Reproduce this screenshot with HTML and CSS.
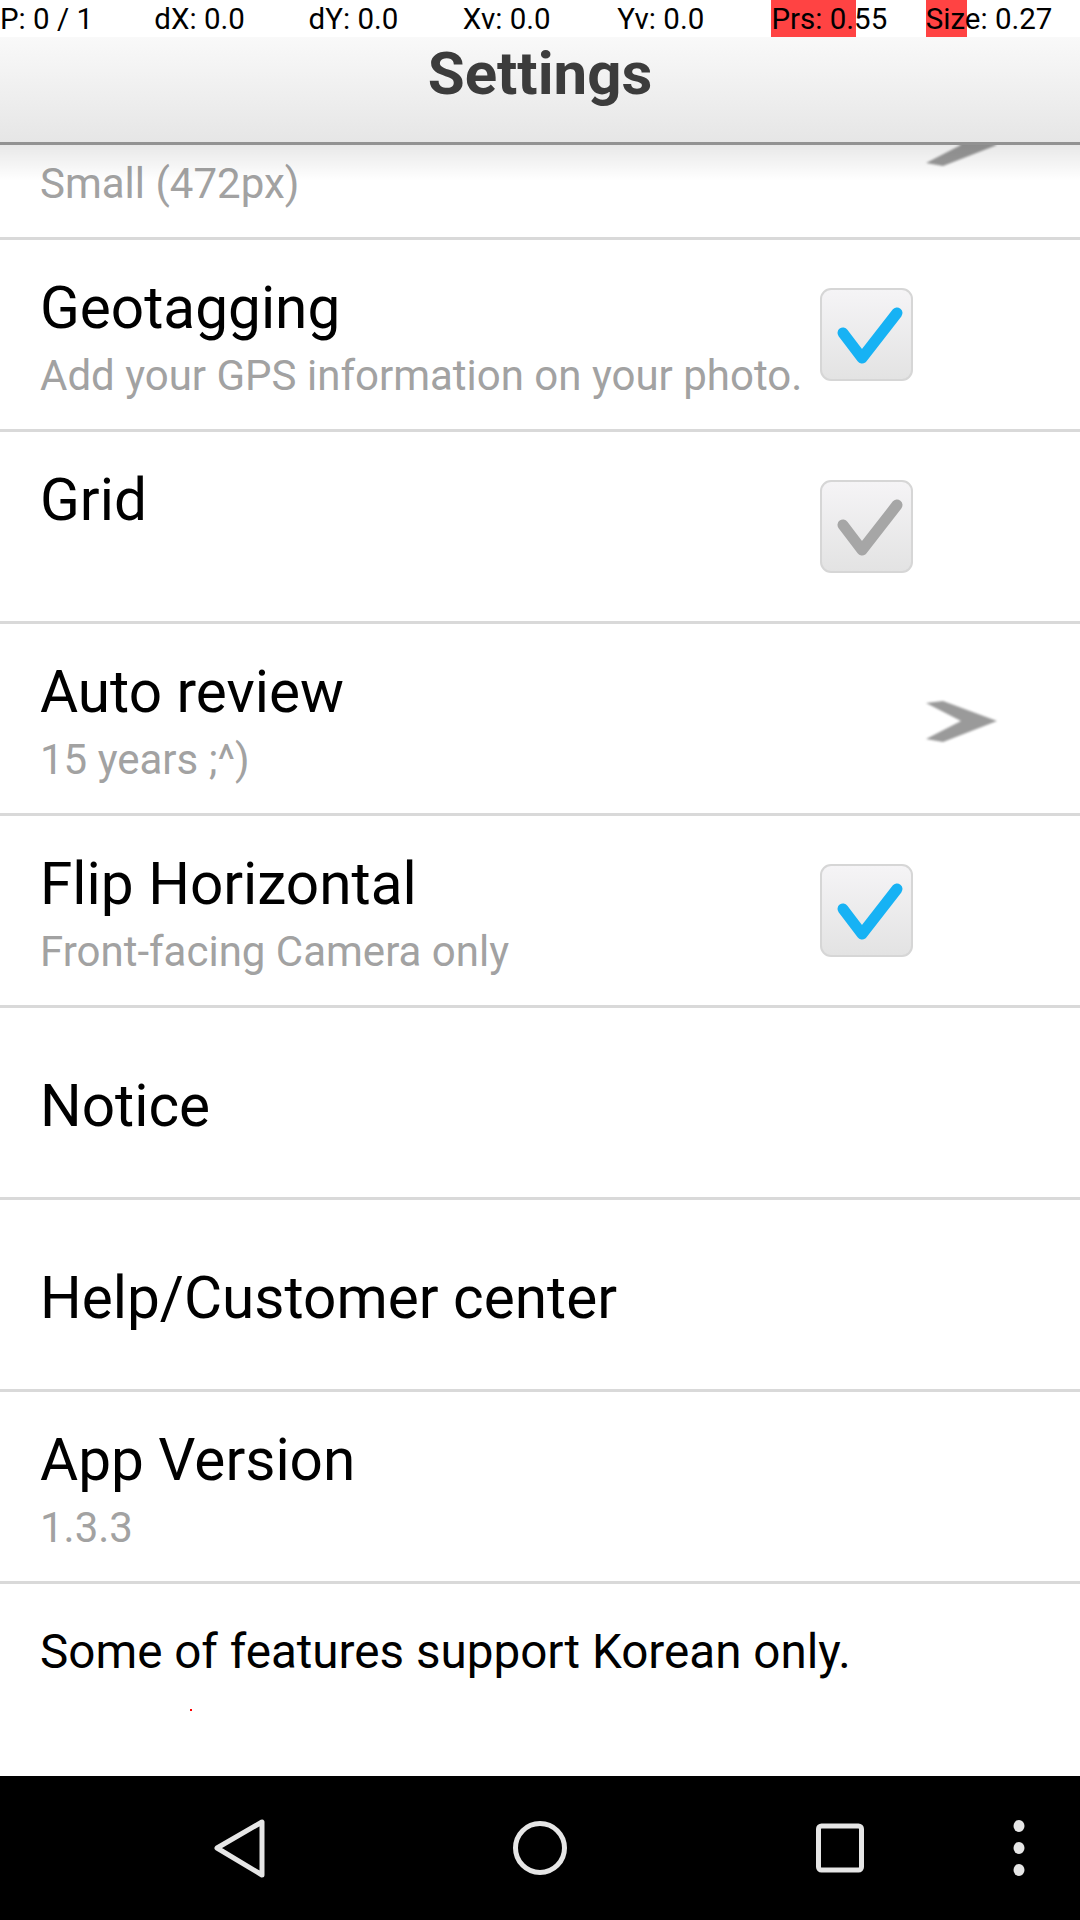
FILE: index.html
```html
<!DOCTYPE html>
<html lang="en">
<head>
<meta charset="utf-8">
<title>Settings</title>
<link rel="stylesheet" href="styles.css">
</head>
<body>
<div class="screen">
  <div class="status">
    <div class="stat"><span class="stat-text">P: 0 / 1</span></div>
    <div class="stat"><span class="stat-text">dX: 0.0</span></div>
    <div class="stat"><span class="stat-text">dY: 0.0</span></div>
    <div class="stat"><span class="stat-text">Xv: 0.0</span></div>
    <div class="stat"><span class="stat-text">Yv: 0.0</span></div>
    <div class="stat"><span class="stat-bar" style="width:55%"></span><span class="stat-text">Prs: 0.55</span></div>
    <div class="stat"><span class="stat-bar" style="width:27%"></span><span class="stat-text">Size: 0.27</span></div>
  </div>

  <header class="appbar">
    <h1 class="appbar-title">Settings</h1>
  </header>

  <main class="list">
    <div class="list-shadow"></div>

    <div class="row row-scrolled">
      <div class="row-text">
        <div class="row-title">&nbsp;</div>
        <div class="row-summary">Small (472px)</div>
      </div>
      <svg class="chevron" viewBox="0 0 72 42" width="72" height="42"><polygon points="0,2 17,0 71,20 17,41 0,38 35,20"/></svg>
    </div>

    <div class="row">
      <div class="row-text">
        <div class="row-title">Geotagging</div>
        <div class="row-summary">Add your GPS information on your photo.</div>
      </div>
      <div class="checkbox">
        <svg viewBox="0 0 93 93" width="93" height="93"><polyline class="check check-on" points="23,45 42,70 77,25"/></svg>
      </div>
    </div>

    <div class="row">
      <div class="row-text">
        <div class="row-title">Grid</div>
        <div class="row-summary">&nbsp;</div>
      </div>
      <div class="checkbox">
        <svg viewBox="0 0 93 93" width="93" height="93"><polyline class="check check-off" points="23,45 42,70 77,25"/></svg>
      </div>
    </div>

    <div class="row">
      <div class="row-text">
        <div class="row-title">Auto review</div>
        <div class="row-summary">15 years ;^)</div>
      </div>
      <svg class="chevron" viewBox="0 0 72 42" width="72" height="42"><polygon points="0,2 17,0 71,20 17,41 0,38 35,20"/></svg>
    </div>

    <div class="row">
      <div class="row-text">
        <div class="row-title">Flip Horizontal</div>
        <div class="row-summary">Front-facing Camera only</div>
      </div>
      <div class="checkbox">
        <svg viewBox="0 0 93 93" width="93" height="93"><polyline class="check check-on" points="23,45 42,70 77,25"/></svg>
      </div>
    </div>

    <div class="row row-single">
      <div class="row-text">
        <div class="row-title">Notice</div>
      </div>
    </div>

    <div class="row row-single">
      <div class="row-text">
        <div class="row-title">Help/Customer center</div>
      </div>
    </div>

    <div class="row">
      <div class="row-text">
        <div class="row-title">App Version</div>
        <div class="row-summary">1.3.3</div>
      </div>
    </div>

    <div class="row row-last">
      <div class="row-text">
        <div class="note">Some of features support Korean only.</div>
        <div class="note-dot"></div>
      </div>
    </div>
  </main>

  <nav class="navbar">
    <div class="nav-slot">
      <svg viewBox="0 0 60 60" width="60" height="60"><polygon class="nav-stroke" points="7,30 52,4 52,57"/></svg>
    </div>
    <div class="nav-slot">
      <svg viewBox="0 0 60 60" width="60" height="60"><circle class="nav-stroke" cx="30" cy="30" r="24.5"/></svg>
    </div>
    <div class="nav-slot">
      <svg viewBox="0 0 60 60" width="60" height="60"><rect class="nav-stroke" x="8.5" y="8" width="43" height="44" rx="3"/></svg>
    </div>
    <div class="nav-menu">
      <svg viewBox="0 0 16 60" width="16" height="60"><ellipse class="nav-fill" cx="8" cy="8" rx="5.5" ry="6"/><ellipse class="nav-fill" cx="8" cy="30" rx="5.5" ry="6"/><ellipse class="nav-fill" cx="8" cy="52" rx="5.5" ry="6"/></svg>
    </div>
  </nav>
</div>
</body>
</html>
```

FILE: styles.css
```css
* { box-sizing: border-box; }

html, body {
  margin: 0;
  padding: 0;
  background: #ffffff;
}

body {
  font-family: Roboto, "Noto Sans", "Liberation Sans", sans-serif;
  color: #000;
}

.screen {
  width: 1080px;
  height: 1920px;
  display: flex;
  flex-direction: column;
  overflow: hidden;
}

/* debug status strip */
.status {
  height: 37px;
  flex: 0 0 37px;
  display: grid;
  grid-template-columns: repeat(7, 1fr);
  background: #ffffff;
}

.stat {
  position: relative;
  height: 37px;
}

.stat-bar {
  position: absolute;
  left: 0;
  top: 0;
  height: 37px;
  background: #ff4343;
}

.stat-text {
  position: relative;
  display: block;
  font-size: 29.5px;
  line-height: 38px;
  color: #000;
  white-space: nowrap;
}

/* app bar */
.appbar {
  flex: 0 0 108px;
  height: 108px;
  background: linear-gradient(#f9f9f9, #e6e6e6);
  border-bottom: 3px solid #929292;
  display: flex;
  justify-content: center;
  padding-top: 2px;
}

.appbar-title {
  margin: 0;
  font-size: 60px;
  line-height: 70px;
  font-weight: 700;
  color: #3c3c3c;
}

/* list */
.list {
  position: relative;
  flex: 1 1 auto;
  overflow: hidden;
}

.list-shadow {
  position: absolute;
  left: 0;
  right: 0;
  top: 0;
  height: 36px;
  background: linear-gradient(rgba(0, 0, 0, 0.09), rgba(0, 0, 0, 0));
  z-index: 2;
  pointer-events: none;
}

.row {
  height: 192px;
  border-bottom: 3px solid #d9d9d9;
  display: flex;
  align-items: center;
}

.row-scrolled {
  margin-top: -97px;
}

.row-text {
  flex: 1 1 auto;
  align-self: flex-start;
  padding-left: 40px;
  padding-top: 33px;
}

.row-title {
  font-size: 58.5px;
  line-height: 70px;
  color: #000;
  white-space: nowrap;
}

.row-summary {
  margin-top: 8px;
  font-size: 42px;
  line-height: 50px;
  color: #a2a2a2;
  white-space: nowrap;
}

.row-single .row-text {
  align-self: center;
  padding-top: 6px;
}

.row-last {
  border-bottom: none;
}

.row-last .row-text {
  padding-top: 38px;
}

.note {
  font-size: 47.6px;
  line-height: 60px;
  color: #000;
}

.note-dot {
  width: 2px;
  height: 2px;
  margin: 27px 0 0 150px;
  background: #ff0000;
}

.checkbox {
  flex: 0 0 93px;
  width: 93px;
  height: 93px;
  margin-right: 167px;
  border: 2px solid #d6d6d6;
  border-radius: 11px;
  background: linear-gradient(#f5f4f6, #e3e3e3);
  overflow: hidden;
}

.checkbox svg {
  display: block;
  margin: -2px;
}

.check {
  fill: none;
  stroke-width: 11;
  stroke-linecap: round;
  stroke-linejoin: round;
}

.check-on { stroke: #17b2f4; }
.check-off { stroke: #a6a6a6; }

.chevron {
  flex: 0 0 72px;
  margin-right: 82px;
  margin-top: 6px;
  fill: #9a9a9a;
  filter: blur(0.8px);
}

/* navigation bar */
.navbar {
  flex: 0 0 144px;
  height: 144px;
  background: #000;
  display: flex;
  align-items: center;
  padding-left: 90px;
}

.nav-slot {
  width: 300px;
  display: flex;
  justify-content: center;
}

.nav-slot svg,
.nav-menu svg { display: block; }

.nav-menu {
  width: 58px;
  display: flex;
  justify-content: center;
}

.nav-stroke {
  fill: none;
  stroke: #e6e6e6;
  stroke-width: 5;
  stroke-linejoin: round;
}

.nav-fill { fill: #e6e6e6; }
```
